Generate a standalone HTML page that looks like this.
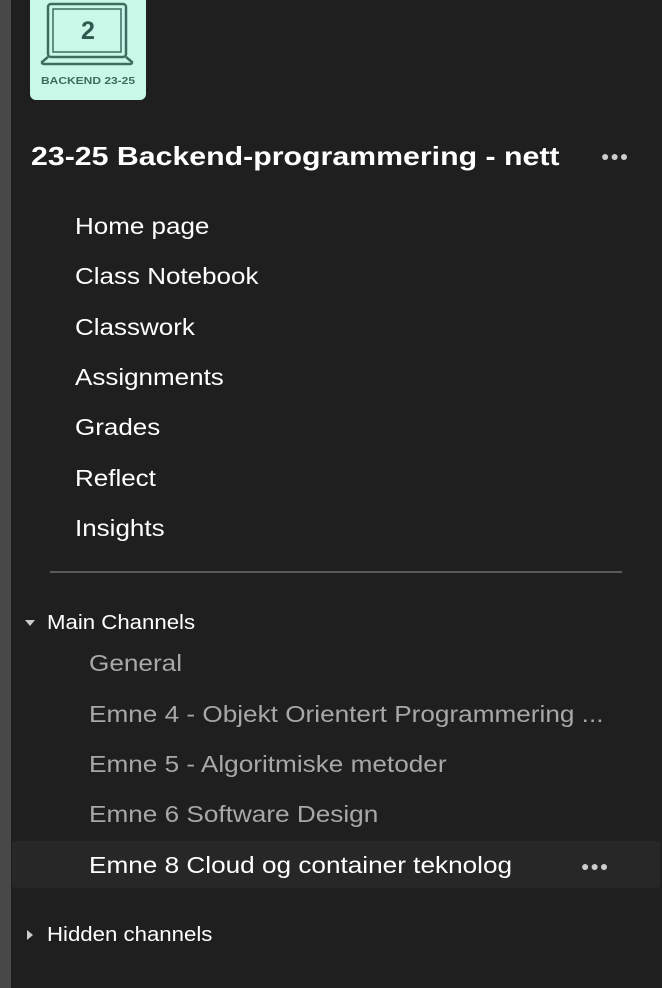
<!DOCTYPE html>
<html><head><style>
html,body{margin:0;padding:0}
body{width:662px;height:988px;background:#1f1f1f;position:relative;overflow:hidden;font-family:"Liberation Sans",Arial,sans-serif;color:#fff}
.strip{position:absolute;left:0;top:0;width:11px;height:988px;background:#484848}
.logo{position:absolute;left:30px;top:-8px;width:116px;height:108px;background:#c9f7e8;border-radius:6px}
.t{position:absolute;white-space:nowrap;transform-origin:0 50%}
.nav{left:75px;font-size:23px;color:#fff;transform:scaleX(1.13)}
.ch{left:89px;font-size:23px;color:#a8a8a8;transform:scaleX(1.137)}
.dots{position:absolute;font-size:14px;letter-spacing:1px;color:#ccc}
</style></head><body>
<div class="strip"></div>
<div class="logo">
<svg width="116" height="108" viewBox="0 0 116 108">
<rect x="18" y="12" width="78" height="53" rx="3" fill="none" stroke="#3e6d60" stroke-width="2.5"/>
<rect x="23" y="17" width="68" height="43" fill="none" stroke="#3e6d60" stroke-width="1.5"/>
<path d="M18 65 L12 70 Q12 72 14 72 L100 72 Q102 72 102 70 L96 65" fill="none" stroke="#3e6d60" stroke-width="2.5"/>
<text x="58" y="47" text-anchor="middle" font-family="Liberation Sans" font-weight="bold" font-size="25" fill="#2f5a4f">2</text>
<text x="58" y="92" text-anchor="middle" font-family="Liberation Sans" font-weight="bold" font-size="10" fill="#3e6d60" textLength="94" lengthAdjust="spacingAndGlyphs">BACKEND 23-25</text>
</svg></div>
<div class="t" style="left:31px;top:141px;font-size:26px;font-weight:bold;transform:scaleX(1.165)">23-25 Backend-programmering - nett</div>
<div class="dots" style="left:601px;top:148px">●●●</div>
<div class="t nav" style="top:213px">Home page</div>
<div class="t nav" style="top:263px">Class Notebook</div>
<div class="t nav" style="top:314px">Classwork</div>
<div class="t nav" style="top:364px">Assignments</div>
<div class="t nav" style="top:414px">Grades</div>
<div class="t nav" style="top:465px">Reflect</div>
<div class="t nav" style="top:515px">Insights</div>
<div style="position:absolute;left:50px;top:571px;width:572px;height:2px;background:#5a5a5a"></div>
<div style="position:absolute;left:25px;top:620px;width:0;height:0;border-left:5px solid transparent;border-right:5px solid transparent;border-top:6px solid #ccc"></div>
<div class="t" style="left:47px;top:612px;font-size:20px;color:#fff;transform:scaleX(1.11)">Main Channels</div>
<div class="t ch" style="top:650px">General</div>
<div class="t ch" style="top:701px">Emne 4 - Objekt Orientert Programmering ...</div>
<div class="t ch" style="top:751px">Emne 5 - Algoritmiske metoder</div>
<div class="t ch" style="top:801px">Emne 6 Software Design</div>
<div style="position:absolute;left:12px;top:841px;width:648px;height:47px;background:#272727;border-radius:4px"></div>
<div class="t ch" style="top:852px;color:#fff">Emne 8 Cloud og container teknolog</div>
<div class="dots" style="left:581px;top:858px">●●●</div>
<div style="position:absolute;left:27px;top:930px;width:0;height:0;border-top:5px solid transparent;border-bottom:5px solid transparent;border-left:6px solid #ccc"></div>
<div class="t" style="left:47px;top:924px;font-size:20px;color:#fff;transform:scaleX(1.11)">Hidden channels</div>
</body></html>
